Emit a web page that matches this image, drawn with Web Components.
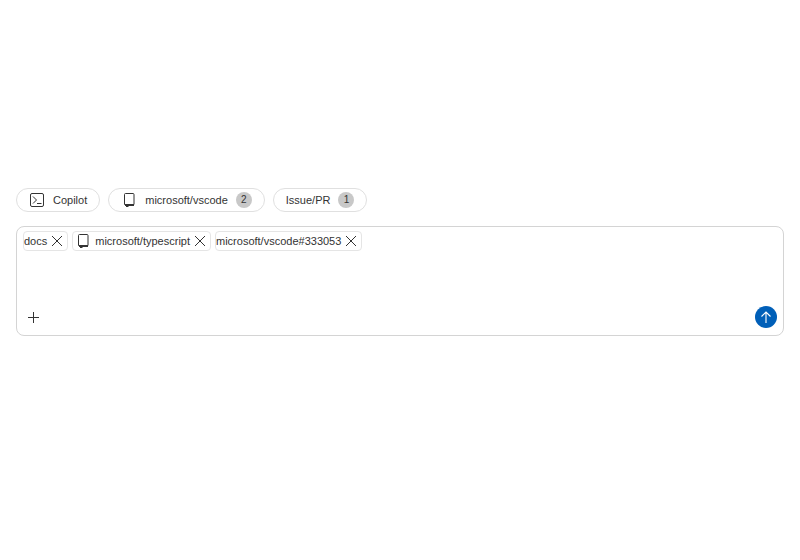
<!DOCTYPE html>
<html>
<head>
<meta charset="utf-8">
<style>
  html, body { margin: 0; height: 100%; background: #fff; }
  body { font-family: "Liberation Sans", Arial, sans-serif; font-size: 12px; color: #333; }
  chat-page { display: block; padding: 188px 16px 0; }
</style>
</head>
<body>
<chat-page>
  <filter-bar>
    <filter-pill icon="terminal">Copilot</filter-pill>
    <filter-pill icon="repo" count="2">microsoft/vscode</filter-pill>
    <filter-pill count="1">Issue/PR</filter-pill>
  </filter-bar>
  <chat-input>
    <context-tag>docs</context-tag>
    <context-tag icon="repo">microsoft/typescript</context-tag>
    <context-tag>microsoft/vscode#333053</context-tag>
  </chat-input>
</chat-page>
<script>
const ICONS = {
    terminal: `<svg width="16" height="16" viewBox="0 0 16 16" fill="none" stroke="currentColor" stroke-width="1"><rect x="1.5" y="1.5" width="13" height="13" rx="1.5"/><path d="M4 4.5 7.5 8 4 11.5M8 11.5h4.5"/></svg>`,
    repo: `<svg width="16" height="16" viewBox="0 0 16 16" fill="none" stroke="currentColor" stroke-width="1"><path d="M13 12.5H3.5V2.5a1 1 0 0 1 1-1h7.5a1 1 0 0 1 1 1v10z"/><path d="M4 13.5h9"/><path d="M5 13h2.5v2H5z" fill="currentColor" stroke="none"/></svg>`,
    close: `<svg width="16" height="16" viewBox="0 0 16 16" fill="none" stroke="currentColor" stroke-width="1"><path d="M3 3 13 13M13 3 3 13"/></svg>`,
    add: `<svg width="16" height="16" viewBox="0 0 16 16" fill="none" stroke="currentColor" stroke-width="1"><path d="M8.5 3v11M3 8.5h11"/></svg>`,
    up: `<svg width="16" height="16" viewBox="0 0 16 16" fill="none" stroke="currentColor" stroke-width="1.1"><path d="M8 14V3M3.5 7.5 8 3l4.5 4.5"/></svg>`
};

class FilterBar extends HTMLElement {
    constructor() {
        super();
        this.attachShadow({ mode: 'open' });
        this.shadowRoot.innerHTML = `
            <style>
                :host { display: flex; gap: 8px; margin-bottom: 14px; }
            </style>
            <slot></slot>
        `;
    }
}

class FilterPill extends HTMLElement {
    constructor() {
        super();
        this.attachShadow({ mode: 'open' });
    }

    connectedCallback() {
        const icon = this.getAttribute('icon');
        const count = this.getAttribute('count');
        this.shadowRoot.innerHTML = `
            <style>
                :host {
                    display: flex;
                    align-items: center;
                    height: 24px;
                    box-sizing: border-box;
                    padding: 0 12px;
                    gap: 8px;
                    border: 1px solid #e0e0e0;
                    border-radius: 12px;
                    font-size: 11px;
                }
                .icon { display: flex; color: #333; }
                .count {
                    width: 16px;
                    height: 16px;
                    border-radius: 50%;
                    background: #c8c8c8;
                    text-align: center;
                    line-height: 16px;
                    font-size: 10px;
                }
            </style>
            ${icon ? `<span class="icon">${ICONS[icon]}</span>` : ''}
            <slot></slot>
            ${count ? `<span class="count">${count}</span>` : ''}
        `;
    }
}

class ContextTag extends HTMLElement {
    constructor() {
        super();
        this.attachShadow({ mode: 'open' });
    }

    connectedCallback() {
        const icon = this.getAttribute('icon');
        this.shadowRoot.innerHTML = `
            <style>
                :host {
                    display: flex;
                    align-items: center;
                    height: 20px;
                    box-sizing: border-box;
                    padding: 0 2px 0 0;
                    gap: 2px;
                    border: 1px solid #e5e5e5;
                    border-radius: 4px;
                    font-size: 11px;
                }
                .icon { display: flex; color: #333; margin-left: 2px; margin-right: 2px; }
                .close { display: flex; color: #333; }
            </style>
            ${icon ? `<span class="icon">${ICONS[icon]}</span>` : ''}
            <slot></slot>
            <span class="close">${ICONS.close}</span>
        `;
    }
}

class ChatInput extends HTMLElement {
    constructor() {
        super();
        this.attachShadow({ mode: 'open' });
        this.shadowRoot.innerHTML = `
            <style>
                :host {
                    display: flex;
                    flex-direction: column;
                    justify-content: space-between;
                    height: 110px;
                    box-sizing: border-box;
                    padding: 4px 6px 0 6px;
                    border: 1px solid #d4d4d4;
                    border-radius: 8px;
                }
                .tags { display: flex; gap: 4px; }
                .toolbar {
                    display: flex;
                    justify-content: space-between;
                    align-items: center;
                    height: 22px;
                    margin-bottom: 7px;
                }
                .add { display: flex; margin-left: 2px; color: #333; }
                .send {
                    display: flex;
                    align-items: center;
                    justify-content: center;
                    width: 22px;
                    height: 22px;
                    border-radius: 50%;
                    background: #005fb8;
                    color: #fff;
                }
            </style>
            <div class="tags"><slot></slot></div>
            <div class="toolbar">
                <span class="add">${ICONS.add}</span>
                <span class="send">${ICONS.up}</span>
            </div>
        `;
    }
}

customElements.define('filter-bar', FilterBar);
customElements.define('filter-pill', FilterPill);
customElements.define('context-tag', ContextTag);
customElements.define('chat-input', ChatInput);
</script>
</body>
</html>
